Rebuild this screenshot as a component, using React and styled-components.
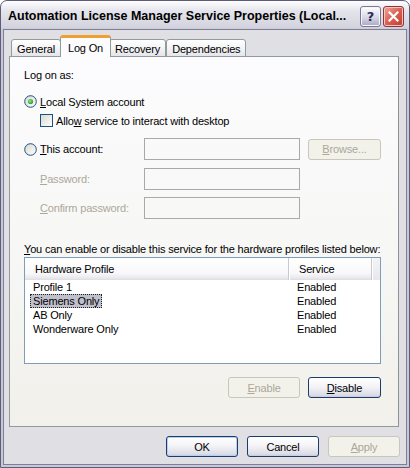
import React from 'react';
import styled, {createGlobalStyle} from 'styled-components';

const Global = createGlobalStyle`
  body {
    margin: 0;
    background: #ffffff;
  }
`;

const FONT = `"Liberation Sans", Arial, sans-serif`;

const profiles = [
  {name: 'Profile 1', state: 'Enabled'},
  {name: 'Siemens Only', state: 'Enabled', selected: true},
  {name: 'AB Only', state: 'Enabled'},
  {name: 'Wonderware Only', state: 'Enabled'},
];

function RadioMark({id, checked}) {
  return (
    <svg width="13" height="13" viewBox="0 0 13 13">
      <defs>
        <linearGradient id={id} x1="0" y1="0" x2="1" y2="1">
          <stop offset="0" stopColor="#d8d7d0" />
          <stop offset="1" stopColor="#ffffff" />
        </linearGradient>
        <radialGradient id={id + 'd'} cx="0.4" cy="0.4" r="0.7">
          <stop offset="0" stopColor="#8fe08f" />
          <stop offset="1" stopColor="#1a9a1a" />
        </radialGradient>
      </defs>
      <circle cx="6.5" cy="6.5" r="5.8" fill={`url(#${id})`} stroke="#1c5180" strokeWidth="1" />
      {checked && <circle cx="6.5" cy="6.5" r="2.6" fill={`url(#${id}d)`} />}
    </svg>
  );
}

function CheckMark() {
  return (
    <svg width="13" height="13" viewBox="0 0 13 13">
      <defs>
        <linearGradient id="cbg" x1="0" y1="0" x2="1" y2="1">
          <stop offset="0" stopColor="#d8d7d0" />
          <stop offset="1" stopColor="#ffffff" />
        </linearGradient>
      </defs>
      <rect x="0.5" y="0.5" width="12" height="12" fill="url(#cbg)" stroke="#1c5180" />
    </svg>
  );
}

function CloseGlyph() {
  return (
    <svg width="11" height="11" viewBox="0 0 11 11">
      <path d="M1.5 1.5 L9.5 9.5 M9.5 1.5 L1.5 9.5" stroke="#ffffff" strokeWidth="2.2" strokeLinecap="square" />
    </svg>
  );
}

export default function App() {
  return (
    <>
      <Global />
      <Window>
        <TitleBar>
          <Title>Automation License Manager Service Properties (Local...</Title>
          <Caption>
            <HelpBtn>?</HelpBtn>
            <CloseBtn><CloseGlyph /></CloseBtn>
          </Caption>
        </TitleBar>
        <Client>
          <TabStrip>
            <Tab>General</Tab>
            <Tab active>Log On</Tab>
            <Tab>Recovery</Tab>
            <Tab>Dependencies</Tab>
          </TabStrip>
          <Panel>
            <Text>Log on as:</Text>
            <Choice style={{marginTop: 13}}>
              <RadioMark id="r1" checked />
              <span><U>L</U>ocal System account</span>
            </Choice>
            <Choice indent style={{marginTop: 6}}>
              <CheckMark />
              <span>Allo<U>w</U> service to interact with desktop</span>
            </Choice>
            <FieldRow style={{marginTop: 11}}>
              <FieldLabel>
                <Choice>
                  <RadioMark id="r2" />
                  <span><U>T</U>his account:</span>
                </Choice>
              </FieldLabel>
              <Input />
              <Button disabled wide={73}><U>B</U>rowse...</Button>
            </FieldRow>
            <FieldRow style={{marginTop: 8}}>
              <FieldLabel indent disabled><U>P</U>assword:</FieldLabel>
              <Input />
            </FieldRow>
            <FieldRow style={{marginTop: 7}}>
              <FieldLabel indent disabled><U>C</U>onfirm password:</FieldLabel>
              <Input />
            </FieldRow>
            <Text style={{marginTop: 24}}><U>Y</U>ou can enable or disable this service for the hardware profiles listed below:</Text>
            <ListView>
              <ListHeader>
                <HeadCell w={264}>Hardware Profile</HeadCell>
                <HeadCell w={83}>Service</HeadCell>
                <HeadRest />
              </ListHeader>
              {profiles.map((p) => (
                <ListRow key={p.name}>
                  <NameCell>
                    <Item selected={p.selected}>{p.name}</Item>
                  </NameCell>
                  <StateCell>{p.state}</StateCell>
                </ListRow>
              ))}
            </ListView>
            <ButtonRow>
              <Button disabled><U>E</U>nable</Button>
              <Button wide={73}><U>D</U>isable</Button>
            </ButtonRow>
          </Panel>
          <Footer>
            <Button isDefault>OK</Button>
            <Button>Cancel</Button>
            <Button disabled><U>A</U>pply</Button>
          </Footer>
        </Client>
      </Window>
    </>
  );
}

const Window = styled.div`
  width: 410px;
  height: 468px;
  box-sizing: border-box;
  border: 1px solid #5d5d7a;
  border-radius: 7px 7px 0 0;
  background: linear-gradient(#ffffff 0px, #e4e4ec 10px, #d4d4de 26px, #c8c8d6 29px, #c8c8d6 100%);
  padding: 0 2px 2px 2px;
  display: flex;
  flex-direction: column;
  font-family: ${FONT};
  font-size: 11px;
  letter-spacing: -0.17px;
  color: #000;
`;

const TitleBar = styled.div`
  height: 28px;
  display: flex;
  align-items: center;
  justify-content: space-between;
  padding: 0 3px 0 5px;
`;

const Title = styled.div`
  font-family: "Liberation Sans", Arial, sans-serif;
  font-weight: bold;
  font-size: 12.5px;
  letter-spacing: 0;
  color: #000;
  white-space: nowrap;
  padding-top: 1px;
`;

const Caption = styled.div`
  display: flex;
  gap: 2px;
  padding-top: 2px;
`;

const CapButton = styled.div`
  width: 21px;
  height: 21px;
  box-sizing: border-box;
  border-radius: 3px;
  display: flex;
  align-items: center;
  justify-content: center;
`;

const HelpBtn = styled(CapButton)`
  border: 1px solid #7a7a96;
  background: linear-gradient(#ffffff, #d8d8e6 55%, #a8a8c0);
  box-shadow: inset 0 0 0 1px #f6f6fa;
  color: #2c2c5a;
  font-family: "DejaVu Sans", sans-serif;
  font-weight: bold;
  font-size: 13px;
`;

const CloseBtn = styled(CapButton)`
  border: 1px solid #8e3434;
  background: linear-gradient(135deg, #f2a8a0, #dc5e52 50%, #c03c30);
  box-shadow: inset 0 0 0 1px #f4c8c0;
`;

const Client = styled.div`
  flex: 1;
  border: 1px solid #7e7e98;
  background: #e0dfe3;
  padding: 5px 6px 0 5px;
  display: flex;
  flex-direction: column;
`;

const TabStrip = styled.div`
  height: 22px;
  display: flex;
  align-items: flex-end;
  padding-left: 2px;
  margin-bottom: -1px;
  position: relative;
  z-index: 1;
`;

const Tab = styled.div`
  box-sizing: border-box;
  height: ${(p) => (p.active ? 22 : 18)}px;
  padding: 0 ${(p) => (p.active ? 7 : 5)}px;
  margin: 0 ${(p) => (p.active ? -2 : 0)}px 0 0;
  margin-left: ${(p) => (p.active ? -1 : 0)}px;
  display: flex;
  align-items: center;
  border: 1px solid #919b9c;
  border-bottom: ${(p) => (p.active ? 'none' : '1px solid #919b9c')};
  border-top: ${(p) => (p.active ? '3px solid #f0a030' : '1px solid #919b9c')};
  border-radius: 3px 3px 0 0;
  background: ${(p) => (p.active ? '#fcfcfe' : 'linear-gradient(#ffffff, #f2f2f4 60%, #e4e4ea)')};
  position: relative;
  z-index: ${(p) => (p.active ? 2 : 0)};
  padding-top: ${(p) => (p.active ? 0 : 2)}px;
  white-space: nowrap;
`;

const Panel = styled.div`
  box-sizing: border-box;
  width: 390px;
  height: 371px;
  border: 1px solid #919b9c;
  border-right-color: #8a9495;
  background: linear-gradient(#fcfcfe, #f6f6f4 60%, #f1f0ea);
  padding: 12px 17px 0 14px;
  display: flex;
  flex-direction: column;
`;

const Text = styled.div`
  line-height: 13px;
  white-space: nowrap;
`;

const U = styled.span`
  text-decoration: underline;
  text-underline-offset: 1px;
`;

const Choice = styled.div`
  display: flex;
  align-items: center;
  gap: 3px;
  height: 13px;
  margin-left: ${(p) => (p.indent ? 16 : 0)}px;
  white-space: nowrap;
`;

const FieldRow = styled.div`
  display: flex;
  align-items: center;
  height: 22px;
`;

const FieldLabel = styled.div`
  width: 120px;
  padding-left: ${(p) => (p.indent ? 16 : 0)}px;
  box-sizing: border-box;
  color: ${(p) => (p.disabled ? '#aca899' : '#000')};
  white-space: nowrap;
`;

const Input = styled.div`
  width: 156px;
  height: 22px;
  box-sizing: border-box;
  border: 1px solid #a7a9ac;
  margin-right: 8px;
`;

const Button = styled.button`
  width: ${(p) => p.wide || 72}px;
  height: 21px;
  box-sizing: border-box;
  border-radius: 3px;
  font-family: ${FONT};
  font-size: 11px;
  letter-spacing: -0.17px;
  padding: 0;
  border: 1px solid ${(p) => (p.disabled ? '#c9c7ba' : '#1c3c6c')};
  color: ${(p) => (p.disabled ? '#aca899' : '#000')};
  background: ${(p) => (p.disabled ? '#f2f1ea' : 'linear-gradient(#ffffff, #f4f4f8 45%, #dcdce6 90%, #c8c8d8)')};
  box-shadow: ${(p) => (p.isDefault ? 'inset 0 0 0 1px #b8d0f0' : 'none')};
`;

const ListView = styled.div`
  margin-top: 1px;
  height: 107px;
  box-sizing: border-box;
  border: 1px solid #7f9db9;
  background: #ffffff;
`;

const ListHeader = styled.div`
  height: 22px;
  display: flex;
  background: linear-gradient(#ffffff, #f8f8fa 70%, #ececf0 88%, #dcdce2);
`;

const HeadCell = styled.div`
  width: ${(p) => p.w}px;
  box-sizing: border-box;
  padding-left: 10px;
  display: flex;
  align-items: center;
  border-right: 1px solid #c8c8d0;
  box-shadow: 1px 0 0 #ffffff;
`;

const HeadRest = styled.div`
  flex: 1;
  margin: 0 0 0 1px;
  background: linear-gradient(#f4f4f6, #e8e8ec);
`;

const ListRow = styled.div`
  height: 14px;
  display: flex;
  align-items: center;
`;

const NameCell = styled.div`
  width: 264px;
  padding-left: 5px;
  box-sizing: border-box;
`;

const Item = styled.span`
  display: inline-block;
  line-height: 12px;
  padding: 0 2px;
  border: 1px dotted ${(p) => (p.selected ? '#202020' : 'transparent')};
  background: ${(p) => (p.selected ? '#c0c0cc' : 'transparent')};
`;

const StateCell = styled.div`
  padding-left: 8px;
`;

const ButtonRow = styled.div`
  margin-top: 13px;
  display: flex;
  justify-content: flex-end;
  gap: 8px;
`;

const Footer = styled.div`
  margin-top: 9px;
  display: flex;
  justify-content: flex-end;
  gap: 9px;
`;
